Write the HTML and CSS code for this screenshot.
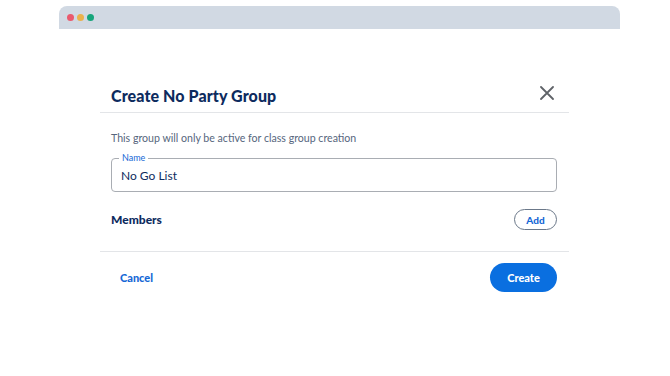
FILE: index.html
```html
<!DOCTYPE html>
<html lang="en">
<head>
    <meta charset="UTF-8">
    <title>Create No Party Group</title>
    <link rel="stylesheet" href="styles.css">
</head>
<body>
    <div class="window">
        <div class="titlebar">
            <span class="dot red"></span>
            <span class="dot yellow"></span>
            <span class="dot green"></span>
        </div>
    </div>

    <div class="modal">
        <div class="modal-header">
            <h1>Create No Party Group</h1>
            <button class="close" aria-label="Close">
                <svg width="14" height="14" viewBox="0 0 14 14">
                    <path d="M1 1 L13 13 M13 1 L1 13" stroke="#5f6368" stroke-width="1.8" stroke-linecap="round"/>
                </svg>
            </button>
        </div>

        <div class="modal-body">
            <p class="hint">This group will only be active for class group creation</p>
            <div class="field">
                <label for="name">Name</label>
                <input type="text" id="name" value="No Go List">
            </div>
            <div class="members">
                <h2>Members</h2>
                <button class="btn-outline">Add</button>
            </div>
        </div>

        <div class="modal-footer">
            <button class="btn-text">Cancel</button>
            <button class="btn-primary">Create</button>
        </div>
    </div>
</body>
</html>
```

FILE: styles.css
```css
:root {
    --navy: #0d2b5e;
    --blue: #1668d6;
    --grey-line: #e3e5e8;
}

* {
    box-sizing: border-box;
    margin: 0;
    padding: 0;
}

body {
    font-family: 'Lato', sans-serif;
    background: #ffffff;
    color: var(--navy);
    padding-top: 6px;
}

.window {
    margin-left: 59px;
    width: 561px;
}

.titlebar {
    height: 23px;
    background: #d1d9e3;
    border-radius: 8px 8px 0 0;
    display: flex;
    align-items: center;
    gap: 3px;
    padding-left: 8px;
}

.dot {
    width: 7px;
    height: 7px;
    border-radius: 50%;
}

.red { background: #ea5a6e; }
.yellow { background: #eab24c; }
.green { background: #17a57b; }

.modal {
    margin: 55px 0 0 100px;
    width: 469px;
}

.modal-header {
    display: flex;
    justify-content: space-between;
    align-items: center;
    height: 29px;
    padding: 0 12px 4px 11px;
    border-bottom: 1px solid var(--grey-line);
}

h1 {
    font-size: 16px;
    font-weight: 900;
    line-height: 24px;
    letter-spacing: 0.1px;
}

.close {
    width: 20px;
    height: 20px;
    border: none;
    background: none;
    display: flex;
    align-items: center;
    justify-content: center;
    margin-top: -7px;
    cursor: pointer;
}

.modal-body {
    padding: 17px 12px 21px 11px;
    border-bottom: 1px solid var(--grey-line);
}

.hint {
    font-size: 10.6px;
    line-height: 16px;
    color: #56667d;
}

.field {
    position: relative;
    margin-top: 12px;
}

.field label {
    position: absolute;
    top: -6px;
    left: 8px;
    padding: 0 3px;
    background: #ffffff;
    font-size: 9px;
    line-height: 11px;
    color: var(--blue);
}

.field input {
    width: 100%;
    height: 34px;
    border: 1px solid #a9adb3;
    border-radius: 4px;
    padding: 0 9px;
    font-family: inherit;
    font-size: 12px;
    color: var(--navy);
    outline: none;
}

.members {
    display: flex;
    justify-content: space-between;
    align-items: center;
    margin-top: 17px;
}

h2 {
    font-size: 12px;
    font-weight: 900;
}

.btn-outline {
    width: 43px;
    height: 21px;
    border: 1px solid #6b7889;
    border-radius: 11px;
    background: #ffffff;
    font-family: inherit;
    font-size: 10px;
    font-weight: 900;
    color: var(--blue);
}

.modal-footer {
    display: flex;
    justify-content: space-between;
    align-items: center;
    padding: 11px 12px 0 11px;
}

.btn-text {
    border: none;
    background: none;
    padding: 0 9px;
    font-family: inherit;
    font-size: 11px;
    font-weight: 900;
    color: var(--blue);
}

.btn-primary {
    width: 67px;
    height: 29px;
    border: none;
    border-radius: 15px;
    background: #0a6fe0;
    font-family: inherit;
    font-size: 11px;
    font-weight: 900;
    color: #ffffff;
}
```
